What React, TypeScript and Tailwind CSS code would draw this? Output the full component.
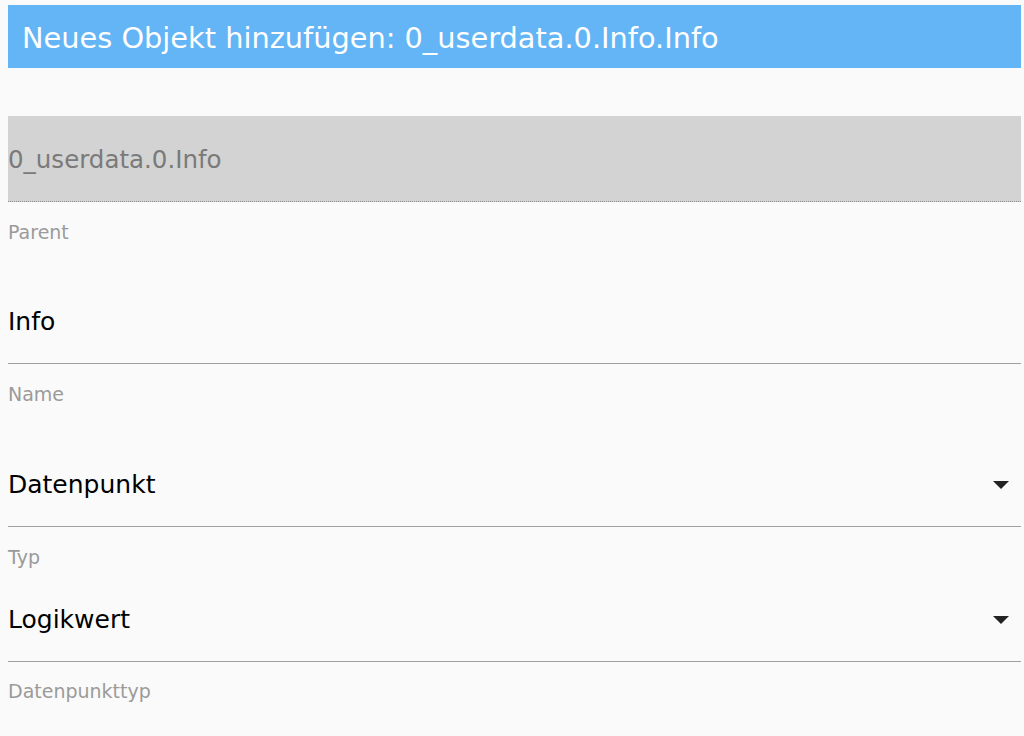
function Caret() {
  return (
    <svg width="16" height="8" viewBox="0 0 16 8" className="mr-[12px] shrink-0">
      <path d="M0 0 H16 L8 8 Z" fill="#222" />
    </svg>
  );
}

function Label({ text, className }: { text: string; className: string }) {
  return (
    <div className={`text-[19px] leading-[22px] text-[#9a9a9a] ${className}`}>{text}</div>
  );
}

export default function App() {
  return (
    <div
      className="min-h-screen bg-[#fafafa] pt-[5px] pl-2 pr-[3px]"
      style={{ fontFamily: "'DejaVu Sans', 'Liberation Sans', sans-serif" }}
    >
      {/* Header */}
      <div className="h-[63px] bg-[#64b5f6] text-white text-[28.8px] px-[14px] pt-[4px] flex items-center">
        Neues Objekt hinzufügen: 0_userdata.0.Info.Info
      </div>

      {/* Parent (disabled) */}
      <div className="mt-[48px] h-[86px] bg-[#d3d3d3] border-b-[1.5px] border-dotted border-[#8a8a8a] pt-[3px] flex items-center text-[24.5px] text-[#7a7a7a]">
        0_userdata.0.Info
      </div>
      <Label text="Parent" className="mt-[19px]" />

      {/* Name */}
      <div className="mt-[37px] h-[84px] border-b-[1.5px] border-[#a0a0a0] flex items-center text-[25px] text-black">
        Info
      </div>
      <Label text="Name" className="mt-[19px]" />

      {/* Typ */}
      <div className="mt-[38px] h-[84px] border-b-[1.5px] border-[#a0a0a0] flex items-center justify-between text-[25px] text-black">
        <span>Datenpunkt</span>
        <Caret />
      </div>
      <Label text="Typ" className="mt-[19px]" />

      {/* Datenpunkttyp */}
      <div className="mt-[10px] h-[84px] border-b-[1.5px] border-[#a0a0a0] flex items-center justify-between text-[25px] text-black">
        <span>Logikwert</span>
        <Caret />
      </div>
      <Label text="Datenpunkttyp" className="mt-[18px]" />
    </div>
  );
}
